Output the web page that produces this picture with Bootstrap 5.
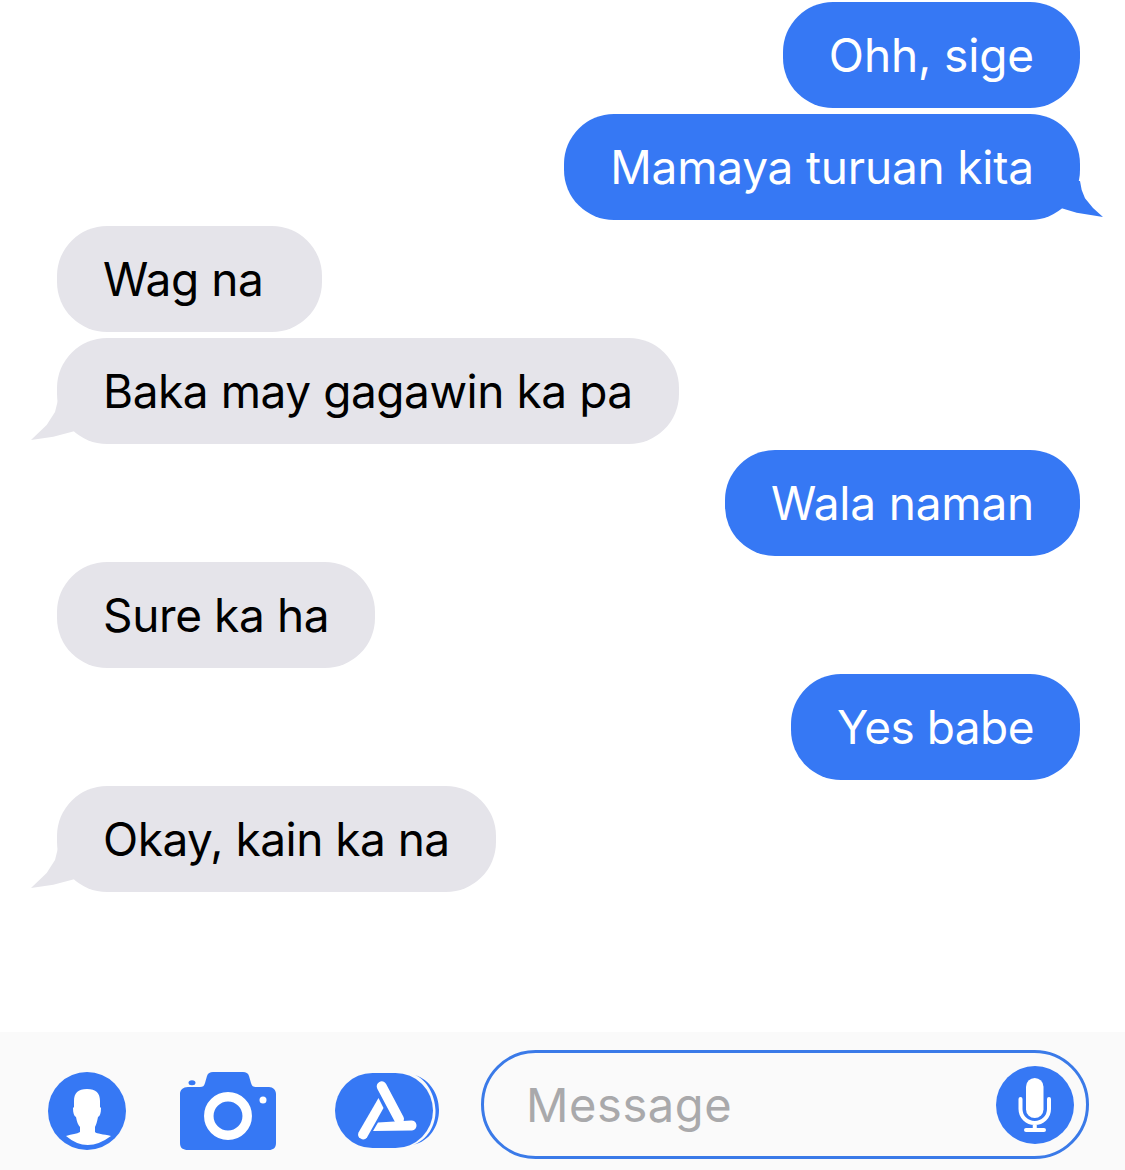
<!DOCTYPE html>
<html lang="tl">
<head>
<meta charset="utf-8">
<title>Messages</title>
<link href="https://cdn.jsdelivr.net/npm/bootstrap@5.3.0/dist/css/bootstrap.min.css" rel="stylesheet">
<style>
html,body{height:1170px;overflow:hidden;background:#fff}
body{font-family:Inter,"Liberation Sans",sans-serif}
.thread{height:1032px;padding:2px 45px 0 57px;gap:6px}
.bubble{position:relative;height:106px;padding:0 46px;border-radius:50px;font-size:46px;line-height:106px;white-space:nowrap}
.bubble-out{background:#3678f4;color:#fff}
.bubble-in{background:#e5e4ea;color:#000}
.track-tighter{letter-spacing:-.52px}
.track-tight{letter-spacing:-.45px}
.track-mid{letter-spacing:-.38px}
.track-loose{letter-spacing:-.12px}
.track-looser{letter-spacing:-.2px}
.bubble-wide{min-width:265px}
.tail{position:absolute;display:block}
.tail-out{right:-23px;bottom:3px;width:50px;height:36px}
.tail-in{left:-26px;bottom:4px;width:50px;height:40px}
.composer{height:138px;background:#fafafa;padding:18px 36px 0 48px}
.tool-icon{display:block;flex:none;margin-top:22px}
.icon-camera{margin-left:54px}
.icon-apps{margin-left:59px}
.message-box{width:609px;height:109px;margin-left:41px;border:3px solid #3a7ae8;border-radius:55px;padding:0 12px 0 42px}
.message-box .tool-icon{margin-top:0}
.placeholder-text{font-size:47px;color:#a9a9ab;letter-spacing:.6px;line-height:1}
</style>
</head>
<body>
<main class="thread d-flex flex-column">
  <div class="bubble bubble-out track-loose align-self-end">Ohh, sige</div>
  <div class="bubble bubble-out track-looser align-self-end">Mamaya turuan kita
    <svg class="tail tail-out" viewBox="0 0 50 36"><path d="M0 0H27L28.700 9L32 17.300L40 27L50 36L23.700 31.700L7 26.700L0 30Z" fill="#3678f4"/></svg>
  </div>
  <div class="bubble bubble-in track-tight bubble-wide align-self-start">Wag na</div>
  <div class="bubble bubble-in track-tight align-self-start">Baka may gagawin ka pa
    <svg class="tail tail-in" viewBox="0 0 50 40"><path d="M50 0H27L24 12L15.700 25L0 40L22.300 36.700L44 31L50 34Z" fill="#e5e4ea"/></svg>
  </div>
  <div class="bubble bubble-out track-looser align-self-end">Wala naman</div>
  <div class="bubble bubble-in track-mid align-self-start">Sure ka ha</div>
  <div class="bubble bubble-out track-tighter align-self-end">Yes babe</div>
  <div class="bubble bubble-in track-tighter align-self-start">Okay, kain ka na
    <svg class="tail tail-in" viewBox="0 0 50 40"><path d="M50 0H27L24 12L15.700 25L0 40L22.300 36.700L44 31L50 34Z" fill="#e5e4ea"/></svg>
  </div>
</main>
<footer class="composer d-flex align-items-start">
  <svg class="tool-icon" width="78" height="78" viewBox="0 0 78 78">
    <circle cx="39" cy="39" r="39" fill="#3678f4"/>
    <path d="M39 17C30 17 26 21 26 29V35L25 36C25 41 26 44 28 45C29 50 30 53 32 55V60C29 62 24 62 18 64Q39 82 63 64C55 62 49 62 47 60V55C48 53 49 50 50 45C52 44 53 41 53 36L52 35V29C52 21 48 17 39 17Z" fill="#fff"/>
  </svg>
  <svg class="tool-icon icon-camera" width="96" height="78" viewBox="0 0 96 78">
    <ellipse cx="12" cy="10.700" rx="3.500" ry="2.500" fill="#3678f4"/>
    <path d="M8 15H20C23 15 24 14 25 11L27 4C28 1 30 0 33 0H63C66 0 68 1 69 4L71 11C72 14 73 15 76 15H89C93 15 96 18 96 22V71C96 76 93 78 89 78H8C3 78 0 76 0 71V22C0 18 3 15 8 15Z" fill="#3678f4"/>
    <circle cx="48" cy="44" r="19.200" fill="none" stroke="#fff" stroke-width="9.500"/>
    <circle cx="83" cy="28" r="3.500" fill="#fff"/>
  </svg>
  <svg class="tool-icon icon-apps" width="105" height="78" viewBox="0 0 105 78">
    <path d="M80 3C95 8 104 22 104 38C104 54 95 69 78 73C92 68 101 54 100.500 38C100 23 92 8 80 3Z" fill="#3678f4"/>
    <rect x="0" y="1" width="98" height="75" rx="37.500" fill="#3678f4"/>
    <path d="M46.700 14.300L64 47" stroke="#fff" stroke-width="10" stroke-linecap="round" fill="none"/>
    <path d="M23.500 60.500L43.500 26L48.500 36L32 65.500A5 5 0 0 1 23.500 60.500Z" fill="#fff"/>
    <path d="M38 59L43 50.500L76 48.500A5 5 0 0 1 77 58.500Z" fill="#fff"/>
  </svg>
  <div class="message-box d-flex align-items-center justify-content-between">
    <span class="placeholder-text">Message</span>
    <svg width="78" height="78" viewBox="0 0 78 78" class="tool-icon">
      <circle cx="39" cy="39" r="39" fill="#3678f4"/>
      <rect x="30" y="12" width="17.500" height="40" rx="8.750" fill="#fff"/>
      <path d="M24.500 33V43C24.500 51 31 57 38.750 57C46.500 57 53 51 53 43V33M38.750 57V64M30 64H48" fill="none" stroke="#fff" stroke-width="4" stroke-linecap="round"/>
    </svg>
  </div>
</footer>
<script src="https://cdn.jsdelivr.net/npm/bootstrap@5.3.0/dist/js/bootstrap.bundle.min.js"></script>
</body>
</html>
